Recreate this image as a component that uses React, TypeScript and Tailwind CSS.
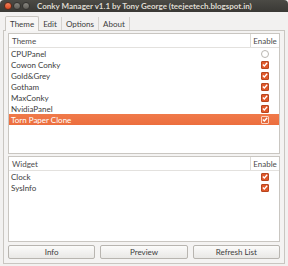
import React from 'react'

type Row = {
  name: string
  enabled: boolean
  selected?: boolean
}

const themes: Row[] = [
  { name: 'CPUPanel', enabled: false },
  { name: 'Cowon Conky', enabled: true },
  { name: 'Gold&Grey', enabled: true },
  { name: 'Gotham', enabled: true },
  { name: 'MaxConky', enabled: true },
  { name: 'NvidiaPanel', enabled: true },
  { name: 'Torn Paper Clone', enabled: true, selected: true },
]

const widgets: Row[] = [
  { name: 'Clock', enabled: true },
  { name: 'SysInfo', enabled: true },
]

function Check({ on, selected }: { on: boolean; selected?: boolean }) {
  if (!on) {
    return <div className="w-[8px] h-[8px] rounded-full border border-[#b9b6b1] bg-white" />
  }
  return (
    <div
      className={
        'w-[8px] h-[8px] rounded-[1px] flex items-center justify-center ' +
        (selected ? 'bg-[#e56a3d] border border-[#fbd3c2]' : 'bg-[#e0582a] border border-[#b8461f]')
      }
    >
      <svg width="6" height="5" viewBox="0 0 6 5">
        <path d="M0.8 2.6 L2.3 4 L5.2 0.8" stroke="white" strokeWidth="1.3" fill="none" />
      </svg>
    </div>
  )
}

function ListPanel({ title, rows, height }: { title: string; rows: Row[]; height: string }) {
  return (
    <div className={'border border-[#c9c6c1] bg-white flex flex-col ' + height}>
      <div className="flex h-[14px] border-b border-[#e3e1de] text-[8px] text-[#4c4c4c]">
        <div className="flex-1 pl-[3px] flex items-center">{title}</div>
        <div className="w-[29px] border-l border-[#dcdad6] flex items-center justify-center">Enable</div>
      </div>
      {rows.map((r, i) => (
        <div
          key={i}
          className={
            'flex h-[11px] items-center text-[8px] ' +
            (r.selected ? 'bg-gradient-to-b from-[#f07a4a] to-[#ec6e3e] text-white' : 'text-[#3c3c3c]')
          }
        >
          <div className="flex-1 pl-[2px]">{r.name}</div>
          <div className="w-[29px] flex justify-center">
            <Check on={r.enabled} selected={r.selected} />
          </div>
        </div>
      ))}
    </div>
  )
}

export default function App() {
  return (
    <div
      className="w-[288px] h-[266px] bg-[#f2f1f0] flex flex-col overflow-hidden"
      style={{ fontFamily: 'Lato, "Open Sans", sans-serif' }}
    >
      {/* title bar */}
      <div className="h-[12px] bg-gradient-to-b from-[#4b4a45] to-[#3a3935] flex items-center pl-[4px] rounded-t-[4px]">
        <div className="w-[8px] h-[8px] rounded-full bg-gradient-to-b from-[#f5825a] to-[#d8461e] border border-[#5a2a1a]" />
        <div className="w-[8px] h-[8px] rounded-full bg-gradient-to-b from-[#8a8881] to-[#5e5c57] ml-[1px] border border-[#33322f]" />
        <div className="w-[8px] h-[8px] rounded-full bg-gradient-to-b from-[#8a8881] to-[#5e5c57] ml-[1px] border border-[#33322f]" />
        <div className="ml-[7px] text-[8px] font-bold text-[#dfdbd2] leading-none whitespace-nowrap">
          Conky Manager v1.1 by Tony George (teejeetech.blogspot.in)
        </div>
      </div>

      {/* tabs */}
      <div className="flex items-end pl-[5px] mt-[3px] h-[15px] text-[8px] text-[#3c3c3c]">
        <div className="h-[15px] px-[4px] border border-b-0 border-[#c9c6c1] bg-[#f7f6f5] rounded-t-[2px] flex items-center -mb-[1px] relative z-10">
          Theme
        </div>
        <div className="h-[13px] px-[4px] border-r border-[#d6d3cf] flex items-center">Edit</div>
        <div className="h-[13px] px-[4px] border-r border-[#d6d3cf] flex items-center">Options</div>
        <div className="h-[13px] px-[4px] border-r border-[#d6d3cf] flex items-center">About</div>
      </div>

      {/* page */}
      <div className="mx-[3px] mb-[2px] flex-1 border border-[#c9c6c1] bg-[#f4f3f2] px-[4px] pt-[2px] flex flex-col">
        <ListPanel title="Theme" rows={themes} height="h-[121px]" />
        <div className="mt-[2px]">
          <ListPanel title="Widget" rows={widgets} height="h-[86px]" />
        </div>
        <div className="flex gap-[5px] mt-[3px]">
          {['Info', 'Preview', 'Refresh List'].map((b) => (
            <div
              key={b}
              className="flex-1 h-[14px] border border-[#b8b5b0] rounded-[2px] bg-gradient-to-b from-[#fbfbfa] to-[#e9e8e6] flex items-center justify-center text-[8px] text-[#3c3c3c]"
            >
              {b}
            </div>
          ))}
        </div>
      </div>
    </div>
  )
}
